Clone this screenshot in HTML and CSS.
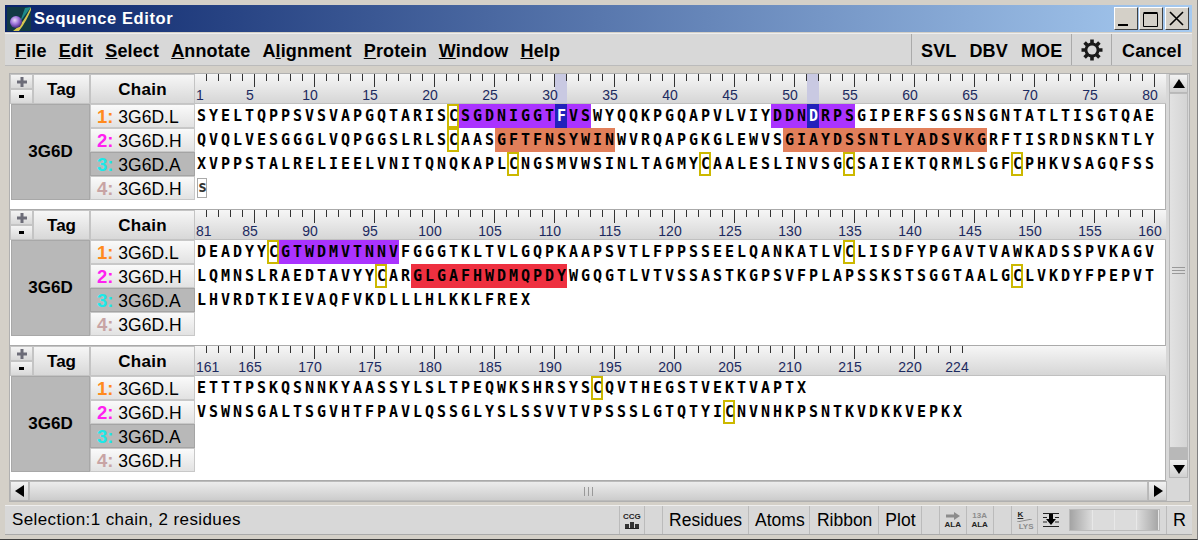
FILE: index.html
```html
<!DOCTYPE html>
<html lang="en">
<head>
  <meta charset="UTF-8">
  <title>Sequence Editor</title>
  <link rel="stylesheet" href="styles.css">
</head>
<body>
<div class="window">

  <div class="titlebar">
    <svg class="app-logo" width="24" height="24" viewBox="0 0 24 24">
      <defs>
        <radialGradient id="ball" cx="0.4" cy="0.35" r="0.7">
          <stop offset="0" stop-color="#e8d8f8"/>
          <stop offset="0.5" stop-color="#9a70d8"/>
          <stop offset="1" stop-color="#3a2070"/>
        </radialGradient>
      </defs>
      <rect width="24" height="24" fill="#123a44"/>
      <path d="M24 0 C20 8 15 18 6 24 L12 24 C17 18 22 8 24 3 Z" fill="#d8c850"/>
      <path d="M18 1 L24 0 L13 15 Z" fill="#1f8a8a"/>
      <circle cx="9" cy="15" r="6" fill="url(#ball)"/>
    </svg>
    <span class="title-text">Sequence Editor</span>
    <span class="win-btn">
      <svg width="24" height="22" viewBox="0 0 24 22"><rect x="4" y="16" width="10" height="2" fill="#000"/></svg>
    </span>
    <span class="win-btn">
      <svg width="24" height="22" viewBox="0 0 24 22"><path d="M4.500 5.500h14v13h-14z M4.500 4.500h14" fill="none" stroke="#000"/></svg>
    </span>
    <span class="win-btn win-close">
      <svg width="24" height="22" viewBox="0 0 24 22"><path d="M5 4l13 13M18 4L5 17" stroke="#000" stroke-width="1.600"/></svg>
    </span>
  </div>

  <div class="menubar">
    <div class="menus">
      <a><u>F</u>ile</a>
      <a><u>E</u>dit</a>
      <a><u>S</u>elect</a>
      <a><u>A</u>nnotate</a>
      <a>A<u>l</u>ignment</a>
      <a><u>P</u>rotein</a>
      <a><u>W</u>indow</a>
      <a><u>H</u>elp</a>
    </div>
    <div class="menu-group tools">
      <a>SVL</a>
      <a>DBV</a>
      <a>MOE</a>
    </div>
    <div class="menu-group gear">
      <svg width="22" height="22" viewBox="0 0 22 22">
        <path d="M11 .5v21M.5 11h21M3.600 3.600l14.800 14.800M18.400 3.600L3.600 18.400" stroke="#1a1a1a" stroke-width="3.600"/>
        <circle cx="11" cy="11" r="7.500" fill="#1a1a1a"/>
        <circle cx="11" cy="11" r="4.600" fill="#d8d8d8"/>
      </svg>
    </div>
    <div class="menu-group cancel"><a>Cancel</a></div>
  </div>

  <div class="panel">
    <div class="panel-top">
      <div class="editor">

        <div class="block">
          <div class="zoom-btns">
            <span><svg width="10" height="10" viewBox="0 0 10 10"><path d="M5 0v10M0 5h10" stroke="#6c6c78" stroke-width="3"/></svg></span>
            <span><svg width="5" height="3" viewBox="0 0 5 3"><rect width="5" height="3" fill="#000"/></svg></span>
          </div>
          <div class="head-btn tag-head">Tag</div>
          <div class="head-btn chain-head">Chain</div>
          <div class="ruler ruler-marked">
            <div class="labels"><span class="first">1</span><span>5</span><span>10</span><span>15</span><span>20</span><span>25</span><span>30</span><span>35</span><span>40</span><span>45</span><span>50</span><span>55</span><span>60</span><span>65</span><span>70</span><span>75</span><span>80</span></div>
          </div>
          <div class="tag-cell">3G6D</div>
          <div class="chains">
            <div class="chain"><b class="c1">1:</b> 3G6D.L</div>
            <div class="chain"><b class="c2">2:</b> 3G6D.H</div>
            <div class="chain active"><b class="c3">3:</b> 3G6D.A</div>
            <div class="chain"><b class="c4">4:</b> 3G6D.H</div>
          </div>
          <div class="seqs">
            <div class="seq">SYELTQPPSVSVAPGQTARIS<i class="cys">C</i><span class="hl purple">SGDNIGGT<b class="sel">F</b>VS</span>WYQQKPGQAPVLVIY<span class="hl purple">DDN<b class="sel">D</b>RPS</span>GIPERFSGSNSGNTATLTISGTQAE</div>
            <div class="seq">QVQLVESGGGLVQPGGSLRLS<i class="cys">C</i>AAS<span class="hl orange">GFTFNSYWIN</span>WVRQAPGKGLEWVS<span class="hl orange">GIAYDSSNTLYADSVKG</span>RFTISRDNSKNTLY</div>
            <div class="seq">XVPPSTALRELIEELVNITQNQKAPL<i class="cys">C</i>NGSMVWSINLTAGMY<i class="cys">C</i>AALESLINVSG<i class="cys">C</i>SAIEKTQRMLSGF<i class="cys">C</i>PHKVSAGQFSS</div>
            <div class="seq"><i class="het">s</i></div>
          </div>
        </div>

        <div class="block">
          <div class="zoom-btns">
            <span><svg width="10" height="10" viewBox="0 0 10 10"><path d="M5 0v10M0 5h10" stroke="#6c6c78" stroke-width="3"/></svg></span>
            <span><svg width="5" height="3" viewBox="0 0 5 3"><rect width="5" height="3" fill="#000"/></svg></span>
          </div>
          <div class="head-btn tag-head">Tag</div>
          <div class="head-btn chain-head">Chain</div>
          <div class="ruler">
            <div class="labels"><span class="first">81</span><span>85</span><span>90</span><span>95</span><span>100</span><span>105</span><span>110</span><span>115</span><span>120</span><span>125</span><span>130</span><span>135</span><span>140</span><span>145</span><span>150</span><span>155</span><span>160</span></div>
          </div>
          <div class="tag-cell">3G6D</div>
          <div class="chains">
            <div class="chain"><b class="c1">1:</b> 3G6D.L</div>
            <div class="chain"><b class="c2">2:</b> 3G6D.H</div>
            <div class="chain active"><b class="c3">3:</b> 3G6D.A</div>
            <div class="chain"><b class="c4">4:</b> 3G6D.H</div>
          </div>
          <div class="seqs">
            <div class="seq">DEADYY<i class="cys">C</i><span class="hl purple">GTWDMVTNNV</span>FGGGTKLTVLGQPKAAPSVTLFPPSSEELQANKATLV<i class="cys">C</i>LISDFYPGAVTVAWKADSSPVKAGV</div>
            <div class="seq">LQMNSLRAEDTAVYY<i class="cys">C</i>AR<span class="hl red">GLGAFHWDMQPDY</span>WGQGTLVTVSSASTKGPSVFPLAPSSKSTSGGTAALG<i class="cys">C</i>LVKDYFPEPVT</div>
            <div class="seq">LHVRDTKIEVAQFVKDLLLHLKKLFREX</div>
            <div class="seq"></div>
          </div>
        </div>

        <div class="block block-last">
          <div class="zoom-btns">
            <span><svg width="10" height="10" viewBox="0 0 10 10"><path d="M5 0v10M0 5h10" stroke="#6c6c78" stroke-width="3"/></svg></span>
            <span><svg width="5" height="3" viewBox="0 0 5 3"><rect width="5" height="3" fill="#000"/></svg></span>
          </div>
          <div class="head-btn tag-head">Tag</div>
          <div class="head-btn chain-head">Chain</div>
          <div class="ruler ruler-short">
            <div class="labels"><span class="first">161</span><span>165</span><span>170</span><span>175</span><span>180</span><span>185</span><span>190</span><span>195</span><span>200</span><span>205</span><span>210</span><span>215</span><span>220</span><span class="last">224</span></div>
          </div>
          <div class="tag-cell">3G6D</div>
          <div class="chains">
            <div class="chain"><b class="c1">1:</b> 3G6D.L</div>
            <div class="chain"><b class="c2">2:</b> 3G6D.H</div>
            <div class="chain active"><b class="c3">3:</b> 3G6D.A</div>
            <div class="chain"><b class="c4">4:</b> 3G6D.H</div>
          </div>
          <div class="seqs">
            <div class="seq">ETTTPSKQSNNKYAASSYLSLTPEQWKSHRSYS<i class="cys">C</i>QVTHEGSTVEKTVAPTX</div>
            <div class="seq">VSWNSGALTSGVHTFPAVLQSSGLYSLSSVVTVPSSSLGTQTYI<i class="cys">C</i>NVNHKPSNTKVDKKVEPKX</div>
            <div class="seq"></div>
            <div class="seq"></div>
          </div>
        </div>

      </div>

      <div class="vscroll">
        <span class="sc-btn"><svg width="14" height="12" viewBox="0 0 14 12"><path d="M7 1l6 9H1z" fill="#000"/></svg></span>
        <span class="sc-thumb sc-thumb-v"><span class="grip-v"></span></span>
        <span class="sc-trough"></span>
        <span class="sc-btn sc-btn-down"><svg width="14" height="12" viewBox="0 0 14 12"><path d="M7 11l6-9H1z" fill="#000"/></svg></span>
      </div>
    </div>

    <div class="hscroll">
      <span class="sc-btn"><svg width="12" height="14" viewBox="0 0 12 14"><path d="M1 7l9-6v12z" fill="#000"/></svg></span>
      <span class="sc-thumb sc-thumb-h"><span class="grip-h"></span></span>
      <span class="sc-btn"><svg width="12" height="14" viewBox="0 0 12 14"><path d="M11 7L2 1v12z" fill="#000"/></svg></span>
    </div>
  </div>

  <div class="statusbar">
    <div class="status-text">Selection:1 chain, 2 residues</div>
    <div class="st-btn icon-btn ccg"><span class="tiny">CCG</span><span class="bars"><i></i><i class="tall"></i><i></i></span></div>
    <div class="st-gap"></div>
    <div class="st-btn residues">Residues</div>
    <div class="st-btn atoms">Atoms</div>
    <div class="st-btn ribbon">Ribbon</div>
    <div class="st-btn plot">Plot</div>
    <div class="st-gap wide"></div>
    <div class="st-btn icon-btn ala">
      <svg width="14" height="8" viewBox="0 0 14 8"><path d="M0 2.500h8V0l6 4-6 4V5.500H0z" fill="#8c8c8c"/></svg>
      <span class="tiny">ALA</span>
    </div>
    <div class="st-btn icon-btn ala"><span class="tiny grey">13A</span><span class="tiny">ALA</span></div>
    <div class="st-gap wide"></div>
    <div class="st-btn icon-btn ala">
      <span class="tiny k">K</span>
      <svg width="15" height="3" viewBox="0 0 15 3"><path d="M0 3L15 0" stroke="#8c8c8c"/></svg>
      <span class="tiny grey lys">LYS</span>
    </div>
    <div class="st-btn icon-btn ala">
      <svg width="16" height="14" viewBox="0 0 16 14"><path d="M0 .5h16M0 13.500h16M0 4.500h4M12 4.500h4M0 9h4M12 9h4" stroke="#222"/><path d="M6 1h4v5h3l-5 6-5-6h3z" fill="#000"/></svg>
    </div>
    <div class="st-slider"><i></i><i></i><i></i><i></i></div>
    <div class="st-btn r-btn">R</div>
  </div>

</div>
</body>
</html>
```

FILE: styles.css
```css
* { box-sizing: border-box; }
html, body { margin: 0; height: 100%; }
body { background: #d4d0c8; font-family: "Liberation Sans", Arial, sans-serif; overflow: hidden; color: #000; }

.window { width: 1198px; height: 540px; padding: 5px 5px 4px 5px; display: flex; flex-direction: column; border-bottom: 1px solid #404040; border-right: 1px solid #808080; }

.titlebar { height: 27px; flex: none; display: flex; align-items: center; padding: 0 3px 0 2px; background: linear-gradient(to right, #0a246a, #a6caf0); }
.app-logo { flex: none; margin-right: 3px; }
.title-text { color: #fff; font-weight: bold; font-size: 16.500px; letter-spacing: 0.6px; flex: 1; }
.win-btn { width: 24px; height: 23px; margin-left: 1px; background: #d4d0c8; border: 1px solid; border-color: #fff #404040 #404040 #fff; display: flex; align-items: center; justify-content: center; }
.win-btn svg { flex: none; }
.win-close { margin-left: 2px; }

.menubar { height: 33px; flex: none; margin-top: 1px; display: flex; align-items: stretch; background: #d8d8d8; border-top: 1px solid #eee; border-bottom: 1px solid #bbb; }
.menubar a { font-weight: bold; font-size: 18px; letter-spacing: 0.15px; }
.menus { flex: 1; display: flex; align-items: center; padding: 3px 0 0 10px; gap: 12px; }
.menu-group { display: flex; align-items: center; border-left: 1px solid #aaa; padding-top: 3px; }
.tools { width: 160px; padding-left: 9px; gap: 13px; }
.gear { width: 40px; justify-content: center; padding-top: 0; }
.cancel { width: 81px; padding-left: 10px; }

.panel { flex: none; margin: 7px 0 0 4px; width: 1181px; height: 429px; border: 1px solid #b0b0b0; display: flex; flex-direction: column; background: #d8d8d8; }
.panel-top { display: flex; flex: 1; min-height: 0; }
.editor { width: 1156px; background: #fff; border-right: 1px solid #b0b0b0; }

.block { display: grid; grid-template-columns: 23px 57px 105px 971px; grid-template-rows: 30px 96px 10px; height: 136px; border-bottom: 1px solid #aaa; }
.block-last { height: 135px; grid-template-rows: 30px 96px 8px; }

.zoom-btns { display: flex; flex-direction: column; }
.zoom-btns span { height: 15px; display: flex; align-items: center; justify-content: center; background: linear-gradient(#f4f4f4, #d8d8d8); border: 1px solid #c4c4c4; }
.head-btn { display: flex; align-items: center; justify-content: center; padding-top: 1px; font-weight: bold; font-size: 17px; background: linear-gradient(#f6f6f6, #d8d8d8); border: 1px solid #c4c4c4; }
.chain-head { letter-spacing: 0.3px; }

.ruler { grid-column: 4; padding: 13px 0 0 1px; background-color: #e4e4e4; background-image: repeating-linear-gradient(to right, transparent 0 59px, #333 59px 60px), repeating-linear-gradient(to right, transparent 0 11px, #333 11px 12px), linear-gradient(#f6f6f6, #d6d6d6); background-size: 960px 13px, 960px 7px, 100% 100%; background-position: 0 0, 0 0, 0 0; background-repeat: no-repeat; border-bottom: 1px solid #c0c0c0; }
.ruler-marked { background-image: repeating-linear-gradient(to right, transparent 0 59px, #333 59px 60px), repeating-linear-gradient(to right, transparent 0 11px, #333 11px 12px), linear-gradient(#c9c9e2, #c9c9e2), linear-gradient(#c9c9e2, #c9c9e2), linear-gradient(#f6f6f6, #d6d6d6); background-size: 960px 13px, 960px 7px, 12px 100%, 12px 100%, 100% 100%; background-position: 0 0, 0 0, 360px 0, 612px 0, 0 0; }
.ruler-short { background-size: 768px 13px, 768px 7px, 100% 100%; }
.labels { display: flex; font-size: 14px; line-height: 17px; color: #1c2a60; white-space: nowrap; }
.labels span { width: 60px; text-align: center; flex: none; }
.labels .first { width: 24px; text-align: left; }
.labels .last { width: 34px; }

.tag-cell { grid-column: 1 / span 2; margin-left: 1px; display: flex; align-items: center; justify-content: center; background: #b8b8b8; border: 1px solid #a8a8a8; font-weight: bold; font-size: 17px; }
.chains { display: flex; flex-direction: column; }
.chain { height: 24px; font-size: 17.500px; line-height: 24px; padding-left: 6px; background: linear-gradient(#fafafa, #e2e2e2); border: 1px solid #c8c8c8; white-space: pre; }
.chain b { font-size: 18.500px; }
.chain.active { background: #b8b8b8; border-color: #a4a4a4; }
.c1 { color: #ff8a1e; }
.c2 { color: #ff20f0; }
.c3 { color: #1ce8e8; }
.c4 { color: #c8a4a4; }

.seqs { grid-column: 4; }
.seq { height: 24px; line-height: 25px; padding-left: 2px; font-family: "DejaVu Sans Mono", monospace; font-weight: bold; font-size: 15px; letter-spacing: calc(12px - 1ch); white-space: pre; overflow: hidden; }
.seq i { font-style: normal; }
.hl { display: inline-block; height: 24px; vertical-align: top; margin-left: -2px; padding-left: 2px; background-repeat: no-repeat; background-size: calc(100% - 2px) 100%; }
.purple { background-image: linear-gradient(#aa33ff, #aa33ff); }
.orange { background-image: linear-gradient(#e27f5a, #e27f5a); }
.red { background-image: linear-gradient(#ee3040, #ee3040); }
.sel { display: inline-block; height: 24px; vertical-align: top; margin-left: -2px; padding-left: 2px; color: #fff; background: linear-gradient(#2222bb, #2222bb) no-repeat; background-size: calc(100% - 2px) 100%; }
.cys { display: inline-block; width: 12px; height: 24px; vertical-align: top; margin: 0 2px 0 -2px; border: 2px solid #ccb800; line-height: 21px; letter-spacing: 0; text-align: center; }
.het { display: inline-block; width: 10px; height: 20px; margin: 2px 0 0 0; border: 1px solid #aaa; line-height: 17px; letter-spacing: 0; text-align: center; vertical-align: top; color: #333; }

.vscroll { width: 23px; padding: 0 1px 3px 3px; display: flex; flex-direction: column; }
.hscroll { height: 20px; width: 1157px; flex: none; display: flex; }
.sc-btn { flex: none; width: 19px; height: 19px; display: flex; align-items: center; justify-content: center; background: linear-gradient(#f2f2f2, #d0d0d0); border: 1px solid #b8b8b8; }
.hscroll .sc-btn { height: 20px; }
.sc-thumb { flex: 1; display: flex; align-items: center; justify-content: center; background: linear-gradient(to right, #e2e2e2, #d4d4d4); border: 1px solid #bbb; }
.sc-thumb-v { flex: none; height: 355px; }
.sc-trough { flex: 1; background: #b8b8b8; }
.sc-thumb-h { background: linear-gradient(#ececec, #cccccc); }
.grip-v { width: 13px; height: 7px; border-top: 1px solid #999; border-bottom: 1px solid #999; background: linear-gradient(#999, #999) center / 100% 1px no-repeat; }
.grip-h { width: 9px; height: 9px; border-left: 1px solid #999; border-right: 1px solid #999; background: linear-gradient(#999, #999) center / 1px 100% no-repeat; }

.statusbar { height: 30px; margin-top: 3px; flex: none; display: flex; align-items: stretch; background: #d8d8d8; border-top: 1px solid #eee; border-bottom: 1px solid #aaa; }
.status-text { width: 616px; padding-left: 7px; font-size: 17px; letter-spacing: 0.4px; line-height: 28px; }
.st-btn { display: flex; align-items: center; justify-content: center; font-size: 17.500px; border-left: 1px solid #bbb; }
.icon-btn { flex-direction: column; width: 26px; line-height: 1; }
.ccg { border-right: 1px solid #bbb; }
.st-gap { width: 17px; }
.st-gap.wide { width: 18px; border-left: 1px solid #bbb; }
.residues { width: 87px; }
.atoms { width: 61px; padding-left: 1px; }
.ribbon { width: 69px; padding-left: 1px; }
.plot { width: 43px; padding-left: 1px; }
.ala { width: 27px; }
.tiny { font-size: 8px; font-weight: bold; line-height: 9px; color: #222; }
.tiny.grey { color: #8c8c8c; }
.tiny.k { align-self: flex-start; margin-left: 6px; text-decoration: underline; }
.lys { align-self: flex-end; margin-right: 4px; }
.bars { display: flex; align-items: flex-end; gap: 1px; height: 8px; border-bottom: 1px solid #222; }
.bars i { width: 4px; height: 4px; background: #333; }
.bars i.tall { height: 6px; }
.st-slider { width: 91px; margin: 3px 6px 3px 5px; display: flex; background: linear-gradient(to right, #a4a4a4, #dcdcdc 25%, #dcdcdc 75%, #a4a4a4); border: 1px solid #bbb; }
.st-slider i { flex: 1; border-right: 1px solid #e8e8e8; }
.r-btn { width: 26px; font-size: 18px; }
```
